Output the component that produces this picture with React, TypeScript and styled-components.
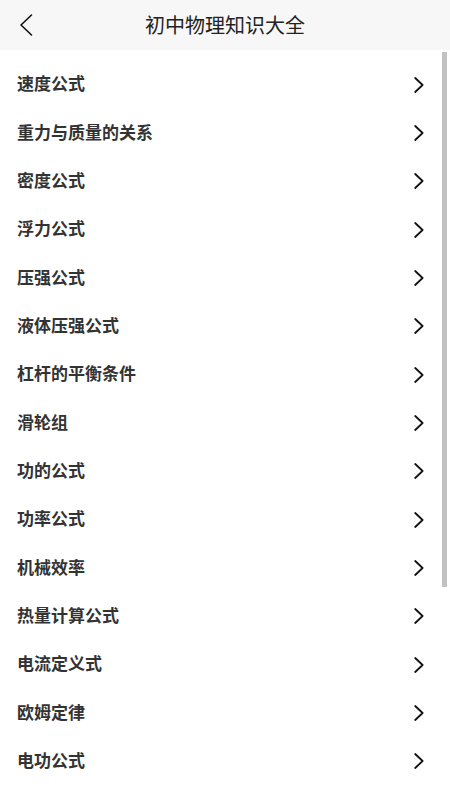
import React from "react";
import styled, { createGlobalStyle } from "styled-components";

const GlobalStyle = createGlobalStyle`
  html, body { margin: 0; padding: 0; height: 100%; background: #ffffff; overflow: hidden; }
  #root { height: 100%; }
  * { box-sizing: border-box; }
`;

const Page = styled.div`
  width: 450px;
  height: 800px;
  display: flex;
  flex-direction: column;
  font-family: "Noto Sans CJK SC", "Noto Sans", sans-serif;
  background: #ffffff;
`;

const Header = styled.header`
  flex: 0 0 50px;
  height: 50px;
  background: #f7f7f7;
  display: grid;
  grid-template-columns: 60px 1fr 60px;
  align-items: center;
`;

const BackButton = styled.button`
  border: none;
  background: transparent;
  padding: 0 0 0 19px;
  height: 50px;
  display: flex;
  align-items: center;
  cursor: pointer;
`;

const Title = styled.h1`
  margin: 0;
  text-align: center;
  font-size: 20px;
  font-weight: 400;
  color: #222222;
  line-height: 50px;
`;

const Scroller = styled.div`
  position: relative;
  flex: 1 1 auto;
  overflow: hidden;
`;

const ScrollThumb = styled.div`
  position: absolute;
  top: 2px;
  right: 3px;
  width: 5px;
  height: 535px;
  background: #c1c1c1;
`;

const List = styled.ul`
  list-style: none;
  margin: 0;
  padding: 10px 0 0 0;
`;

const Row = styled.li`
  height: 48.35px;
  display: flex;
  align-items: center;
  justify-content: space-between;
  padding: 0 26px 0 17px;
  cursor: pointer;
`;

const Label = styled.span`
  font-size: 17px;
  font-weight: 600;
  color: #333333;
  line-height: 1;
  margin-bottom: 3px;
`;

const Chevron = styled.svg`
  width: 10px;
  height: 16px;
  flex: 0 0 auto;
  margin-top: 1px;
`;

const items = [
  "速度公式",
  "重力与质量的关系",
  "密度公式",
  "浮力公式",
  "压强公式",
  "液体压强公式",
  "杠杆的平衡条件",
  "滑轮组",
  "功的公式",
  "功率公式",
  "机械效率",
  "热量计算公式",
  "电流定义式",
  "欧姆定律",
  "电功公式",
];

export default function App() {
  return (
    <>
      <GlobalStyle />
      <Page>
        <Header>
          <BackButton aria-label="返回">
            <svg width="14" height="22" viewBox="0 0 14 22" fill="none">
              <polyline
                points="12.5,1 2,11 12.5,21"
                stroke="#111111"
                strokeWidth="1.6"
                strokeLinecap="round"
                strokeLinejoin="round"
              />
            </svg>
          </BackButton>
          <Title>初中物理知识大全</Title>
          <div />
        </Header>
        <Scroller>
          <List>
            {items.map((t) => (
              <Row key={t}>
                <Label>{t}</Label>
                <Chevron viewBox="0 0 10 16" fill="none">
                  <polyline
                    points="1.2,1 8.6,8 1.2,15"
                    stroke="#111111"
                    strokeWidth="1.8"
                    strokeLinecap="round"
                    strokeLinejoin="round"
                  />
                </Chevron>
              </Row>
            ))}
          </List>
          <ScrollThumb />
        </Scroller>
      </Page>
    </>
  );
}
